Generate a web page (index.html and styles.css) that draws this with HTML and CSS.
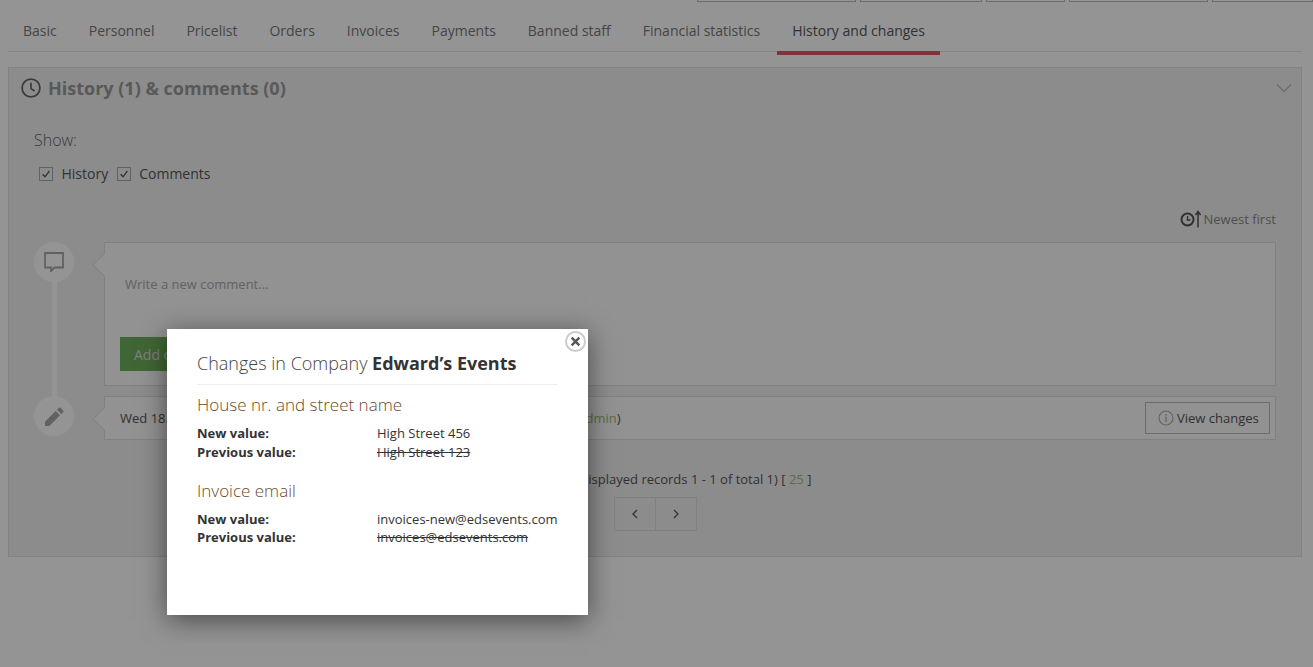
FILE: index.html
```html
<!DOCTYPE html>
<html lang="en">
<head>
<meta charset="utf-8">
<title>History and changes</title>
<link rel="stylesheet" href="styles.css">
</head>
<body>
<div class="topbtns">
  <span class="tb tb1"></span><span class="tb tb2"></span><span class="tb tb3"></span><span class="tb tb4"></span><span class="tb tb5"></span>
</div>
<nav class="tabs">
  <a class="tab">Basic</a>
  <a class="tab">Personnel</a>
  <a class="tab">Pricelist</a>
  <a class="tab">Orders</a>
  <a class="tab">Invoices</a>
  <a class="tab">Payments</a>
  <a class="tab">Banned staff</a>
  <a class="tab">Financial statistics</a>
  <a class="tab active">History and changes</a>
</nav>
<section class="panel">
  <header class="panel-head">
    <svg class="clock" viewBox="0 0 20 20" width="20" height="20"><circle cx="10" cy="10" r="8.9" fill="none" stroke="#666" stroke-width="1.8"/><path d="M10 4.8V10.6L13.6 13" fill="none" stroke="#666" stroke-width="1.7"/></svg>
    <h2 class="panel-title">History (1) &amp; comments (0)</h2>
    <svg class="chev" viewBox="0 0 16 10" width="16" height="10"><path d="M1 1.5L8 8.5L15 1.5" fill="none" stroke="#bbb" stroke-width="1.3"/></svg>
  </header>
  <div class="body">
    <div class="show">Show:</div>
    <div class="checks">
      <label class="check"><svg viewBox="0 0 14 14" width="14" height="14"><rect x=".5" y=".5" width="13" height="13" fill="none" stroke="#aaa"/><path d="M3.6 7.2L6 9.8L10.4 4" fill="none" stroke="#555" stroke-width="1.3"/></svg>History</label>
      <label class="check"><svg viewBox="0 0 14 14" width="14" height="14"><rect x=".5" y=".5" width="13" height="13" fill="none" stroke="#aaa"/><path d="M3.6 7.2L6 9.8L10.4 4" fill="none" stroke="#555" stroke-width="1.3"/></svg>Comments</label>
    </div>
    <div class="sort">
      <svg viewBox="0 0 22 18" width="22" height="18"><circle cx="7.5" cy="9.5" r="6" fill="none" stroke="#555" stroke-width="2"/><path d="M7.5 6V10H10.5" fill="none" stroke="#555" stroke-width="1.4"/><path d="M18 17.5V2M15.4 5L18 1.5L20.6 5" fill="none" stroke="#555" stroke-width="1.5"/></svg>
      <span>Newest first</span>
    </div>
    <div class="timeline first">
      <div class="rail"><span class="dot"><svg viewBox="0 0 20 20" width="20" height="20"><path d="M1 1H19V15.5H10.5L7 19V15.5H1Z" fill="none" stroke="#a8a8a8" stroke-width="1.8"/></svg></span></div>
      <div class="box comment-box">
        <div class="placeholder">Write a new comment...</div>
        <button class="add">Add comment</button>
      </div>
    </div>
    <div class="timeline last">
      <div class="rail"><span class="dot"><svg viewBox="0 0 20 20" width="19" height="19"><path d="M0 20V15.4L11.2 4.2L15.8 8.8L4.6 20ZM12.6 2.8L14.6 .8A1.2 1.2 0 0 1 16.2 .8L19.2 3.8A1.2 1.2 0 0 1 19.2 5.4L17.2 7.4Z" fill="#a8a8a8"/></svg></span></div>
      <div class="box event-box">
        <div class="event-text">Wed 18.04.2018 12:22:25 - Company details were updated by Administrato (<em>admin</em>)</div>
        <button class="view"><svg viewBox="0 0 16 16" width="16" height="16"><circle cx="8" cy="8" r="7" fill="none" stroke="#aaa" stroke-width="1.1"/><path d="M8 6.8V12M8 4V5.4" fill="none" stroke="#aaa" stroke-width="1.3"/></svg>View changes</button>
      </div>
    </div>
    <div class="records">Page 1 of 1 (displayed records 1 - 1 of total 1) [ <em>25</em> ]</div>
    <div class="pager">
      <span class="pg"><svg viewBox="0 0 8 10" width="8" height="10"><path d="M6 1L2 5L6 9" fill="none" stroke="#555" stroke-width="1.3"/></svg></span>
      <span class="pg"><svg viewBox="0 0 8 10" width="8" height="10"><path d="M2 1L6 5L2 9" fill="none" stroke="#555" stroke-width="1.3"/></svg></span>
    </div>
  </div>
</section>
<div class="overlay"></div>
<div class="modal">
  <span class="close"><svg viewBox="0 0 10 10" width="11" height="11"><path d="M1.5 1.5L8.5 8.5M8.5 1.5L1.5 8.5" fill="none" stroke="#555" stroke-width="2.2"/></svg></span>
  <h3 class="modal-title">Changes in Company <strong>Edward’s Events</strong></h3>
  <h4 class="field">House nr. and street name</h4>
  <dl class="vals">
    <dt>New value:</dt><dd>High Street 456</dd>
    <dt>Previous value:</dt><dd><s>High Street 123</s></dd>
  </dl>
  <h4 class="field field-next">Invoice email</h4>
  <dl class="vals">
    <dt>New value:</dt><dd>invoices-new@edsevents.com</dd>
    <dt>Previous value:</dt><dd><s>invoices@edsevents.com</s></dd>
  </dl>
</div>
</body>
</html>
```
FILE: styles.css
```css
* { box-sizing: border-box; }
html, body { margin: 0; height: 667px; overflow: hidden; }
body { background: #fff; font-family: "Open Sans", sans-serif; font-size: 13px; color: #555; padding: 0 11px 0 8px; position: relative; }

.topbtns { display: flex; gap: 4px; height: 2px; margin: 0 -11px 0 689px; }
.tb { border: 1px solid #bbb; border-top: 0; display: block; height: 2px; }
.tb1 { width: 159px; } .tb2 { width: 122px; } .tb3 { width: 79px; } .tb4 { width: 139px; } .tb5 { flex: 1; }

.tabs { display: flex; gap: 2px; height: 50px; border-bottom: 1px solid #e6e6e6; color: #777; font-size: 14px; }
.tab { padding: 19px 15px 0; height: 53px; line-height: 19px; }
.tab.active { color: #555; border-bottom: 4px solid #db585e; }

.panel { margin-top: 15px; height: 490px; background: #f2f2f2; border: 1px solid #e0e0e0; }
.panel-head { display: flex; align-items: center; height: 40px; padding: 0 9px 0 12px; }
.panel-title { margin: 0 0 0 7px; flex: 1; font-size: 18px; font-weight: 700; color: #999; line-height: 40px; }
.clock, .chev { display: block; }

.body { padding: 0 25px; }
.show { font-size: 16px; font-weight: 300; line-height: 22px; margin-top: 21px; color: #666; }
.checks { display: flex; gap: 8.5px; margin: 13px 0 0 5px; }
.check { display: flex; align-items: center; gap: 8.5px; font-size: 14px; line-height: 20px; }

.sort { display: flex; justify-content: flex-end; align-items: center; gap: 2px; height: 20px; margin-top: 25px; color: #888; font-size: 13px; }

.timeline { display: flex; margin-top: 13px; }
.timeline.last { margin-top: 10px; }
.rail { width: 70px; flex: none; position: relative; }
.dot { display: flex; align-items: center; justify-content: center; width: 40px; height: 40px; border-radius: 50%; background: #fff; }
.first .rail::after { content: ""; position: absolute; left: 18px; top: 39px; width: 5px; height: 116px; background: #fff; }
.box { flex: 1; background: #fbfbfb; border: 1px solid #dedede; position: relative; }
.box::before { content: ""; position: absolute; left: -9.5px; top: 12.5px; width: 17px; height: 17px; background: #fbfbfb; transform: rotate(45deg); border-left: 1px solid #dedede; border-bottom: 1px solid #dedede; clip-path: polygon(0 0, 100% 100%, 0 100%); }
.comment-box { height: 144px; padding: 32px 15px 0; }
.placeholder { font-size: 13px; line-height: 18px; color: #aaa; margin-left: 5px; }
.add { display: block; margin-top: 44px; width: 130px; height: 34px; border: 0; background: #70b05c; color: #ddd; font: 14px "Open Sans", sans-serif; padding: 0 14px; text-align: left; }
.event-box { height: 44px; display: flex; align-items: center; justify-content: space-between; padding: 0 5px 0 15px; }
.event-text { font-size: 13px; white-space: nowrap; }
.event-text em { font-style: normal; color: #9dbb72; }
.view { display: flex; align-items: center; gap: 3px; height: 32px; width: 125px; padding: 0 0 0 12px; background: none; border: 1px solid #bbb; color: #555; font: 13px "Open Sans", sans-serif; }

.records { text-align: center; margin-top: 30px; padding-left: 8px; line-height: 18px; }
.records em { font-style: normal; color: #9dbb72; }
.pager { display: flex; justify-content: center; margin: 9px 0 0 2px; }
.pg { display: flex; align-items: center; justify-content: center; width: 42px; height: 34px; border: 1px solid #ddd; margin-left: -1px; }

.overlay { position: absolute; inset: 0; background: rgba(0,0,0,.42); }
.modal { position: absolute; left: 167px; top: 329px; width: 421px; height: 286px; background: #fff; box-shadow: 0 5px 25px rgba(0,0,0,.5); padding: 19px 30px; color: #333; }
.close { position: absolute; right: 2px; top: 2px; width: 21px; height: 21px; border-radius: 50%; border: 2px solid #ccc; background: #fff; display: flex; align-items: center; justify-content: center; }
.modal-title { margin: 0; font-size: 18px; font-weight: 300; line-height: 30px; padding-bottom: 6px; border-bottom: 1px solid #eee; color: #444; }
.modal-title strong { font-weight: 700; color: #333; }
.field { margin: 8px 0 0; font-size: 17px; font-weight: 300; line-height: 24px; color: #6b4a2c; }
.field-next { margin-top: 17.5px; }
.vals { display: grid; grid-template-columns: 180px auto; margin: 7px 0 0; line-height: 18.5px; }
.vals dt { font-weight: 700; }
.vals dd { margin: 0; white-space: nowrap; }
```
